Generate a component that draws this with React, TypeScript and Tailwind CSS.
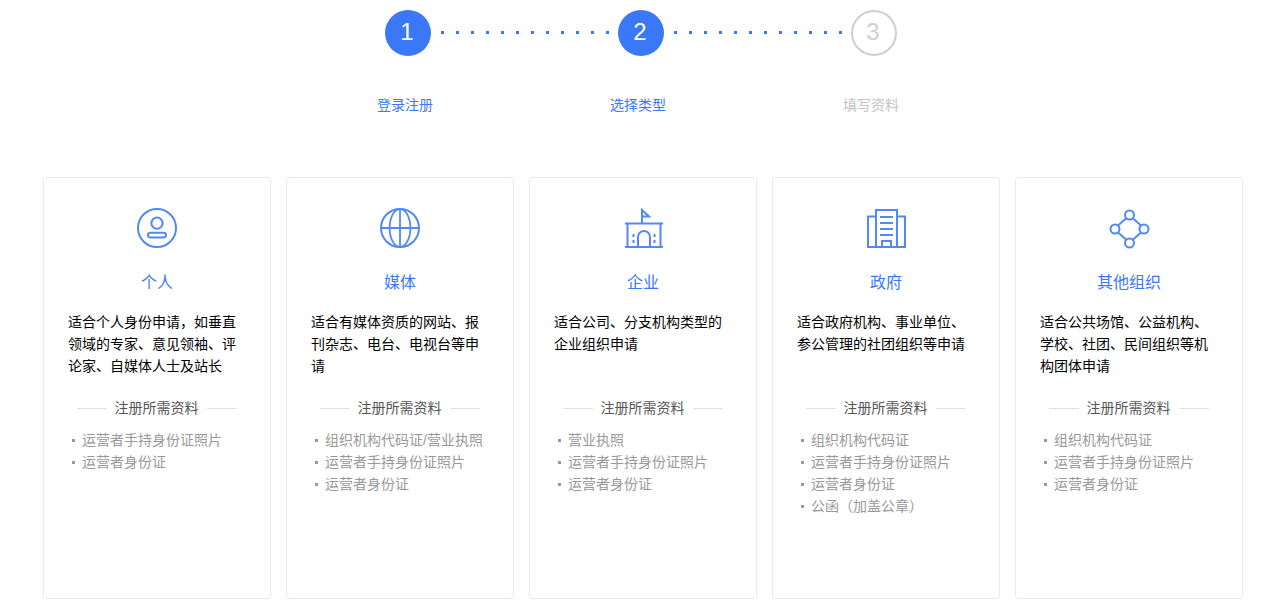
import React from "react";

/* ------------------------------ Icons ------------------------------ */

function PersonIcon() {
  return (
    <svg width="40" height="40" viewBox="0 0 40 40" fill="none" stroke="#5288f8" strokeWidth="2">
      <circle cx="20" cy="20" r="19" />
      <circle cx="20" cy="15.2" r="5.6" />
      <rect x="11" y="24.8" width="18" height="4.6" rx="2.3" />
    </svg>
  );
}

function GlobeIcon() {
  return (
    <svg width="40" height="40" viewBox="0 0 40 40" fill="none" stroke="#5288f8" strokeWidth="1.8">
      <circle cx="20" cy="20" r="19" strokeWidth="2" />
      <ellipse cx="20" cy="20" rx="10.400" ry="19" />
      <path d="M20 1v38M1 20h38" />
    </svg>
  );
}

function SchoolIcon() {
  return (
    <svg width="40" height="40" viewBox="0 -1 40 40" fill="none" stroke="#5288f8" strokeWidth="2">
      <path d="M19 14V1l7 6.400h-7" />
      <path d="M2 14.400h38M2 38h38M4.500 14.400V38M37.500 14.400V38" />
      <path d="M15 38V28a6 6 0 0 1 12 0v10" />
      <path d="M10.500 25v3M10.500 31v3M31.500 25v3M31.500 31v3" />
    </svg>
  );
}

function BuildingIcon() {
  return (
    <svg width="40" height="40" viewBox="0 -1 40 40" fill="none" stroke="#5288f8" strokeWidth="2">
      <path d="M10 7.500H2V38H39V7.500H31" />
      <path d="M10 38V1H31V38" />
      <path d="M14 8h13M14 14h13M14 20h13M14 26h13" />
      <path d="M16 38V32H25V38" />
    </svg>
  );
}

function NodesIcon() {
  return (
    <svg width="40" height="40" viewBox="-1 -2 40 40" fill="none" stroke="#5288f8" strokeWidth="2" className="overflow-visible">
      <circle cx="19.500" cy="5" r="4.500" />
      <circle cx="19.500" cy="33" r="4.500" />
      <circle cx="5" cy="19" r="4.500" />
      <circle cx="34" cy="19" r="4.500" />
      <path d="M16.500 8 8 15.500M22.500 8 31 15.500M8 22.500 16.500 30M31 22.500 22.500 30" />
    </svg>
  );
}

/* ------------------------------ Data ------------------------------ */

const cards = [
  {
    title: "个人",
    icon: <PersonIcon />,
    desc: "适合个人身份申请，如垂直领域的专家、意见领袖、评论家、自媒体人士及站长",
    docs: ["运营者手持身份证照片", "运营者身份证"],
  },
  {
    title: "媒体",
    icon: <GlobeIcon />,
    desc: "适合有媒体资质的网站、报刊杂志、电台、电视台等申请",
    docs: ["组织机构代码证/营业执照", "运营者手持身份证照片", "运营者身份证"],
  },
  {
    title: "企业",
    icon: <SchoolIcon />,
    desc: "适合公司、分支机构类型的企业组织申请",
    docs: ["营业执照", "运营者手持身份证照片", "运营者身份证"],
  },
  {
    title: "政府",
    icon: <BuildingIcon />,
    desc: "适合政府机构、事业单位、参公管理的社团组织等申请",
    docs: ["组织机构代码证", "运营者手持身份证照片", "运营者身份证", "公函（加盖公章）"],
  },
  {
    title: "其他组织",
    icon: <NodesIcon />,
    desc: "适合公共场馆、公益机构、学校、社团、民间组织等机构团体申请",
    docs: ["组织机构代码证", "运营者手持身份证照片", "运营者身份证"],
  },
];

/* ------------------------------ Steps ------------------------------ */

function Dots() {
  return (
    <div className="w-[187px] flex pl-[10px] gap-[12px]">
      {Array.from({ length: 12 }).map((_, i) => (
        <span key={i} className="w-[3px] h-[3px] bg-[#3b78f7] -mt-px" />
      ))}
    </div>
  );
}

function Circle({ n, active }: { n: number; active?: boolean }) {
  return (
    <div
      className={
        active
          ? "w-[46px] h-[46px] rounded-full bg-[#3b78f7] text-white flex items-center justify-center text-[24px] shrink-0"
          : "w-[46px] h-[46px] rounded-full border-2 border-[#cfcfcf] text-[#cfcfcf] flex items-center justify-center text-[24px] shrink-0"
      }
    >
      <span className="-mt-[2px] -ml-[2px]">{n}</span>
    </div>
  );
}

function Steps() {
  return (
    <div className="pt-[10px]">
      <div className="flex items-center pl-[385px] font-['Liberation_Sans',sans-serif]">
        <Circle n={1} active />
        <Dots />
        <Circle n={2} active />
        <Dots />
        <Circle n={3} />
      </div>
      <div className="flex pl-[377px] mt-[39px] text-[14px] leading-[20px]">
        <div className="w-[233px] text-[#3b78f7]">登录注册</div>
        <div className="w-[233px] text-[#3b78f7]">选择类型</div>
        <div className="w-[233px] text-[#c4c4c4]">填写资料</div>
      </div>
    </div>
  );
}

/* ------------------------------ Card ------------------------------ */

function Card({ card }: { card: (typeof cards)[number] }) {
  return (
    <div className="w-[228px] h-[422px] shrink-0 bg-white border border-[#ebebeb] rounded-[3px] pt-[30px]">
      <div className="flex justify-center">{card.icon}</div>
      <div className="mt-[23px] text-center text-[16px] leading-[24px] text-[#3b78f7]">{card.title}</div>
      <p className="mt-[16px] ml-[24px] w-[172px] h-[66px] text-[14px] leading-[22px] text-black">{card.desc}</p>
      <div className="mt-[20px] flex items-center justify-center gap-[8px] -ml-px">
        <span className="w-[30px] h-px bg-[#e0e0e0]" />
        <span className="text-[14px] leading-[22px] text-[#555555]">注册所需资料</span>
        <span className="w-[30px] h-px bg-[#e0e0e0]" />
      </div>
      <ul className="mt-[10px] ml-[28px] text-[14px] leading-[22px] text-[#999999]">
        {card.docs.map(doc => (
          <li key={doc} className="flex items-center whitespace-nowrap">
            <span className="w-[3px] h-[3px] bg-[#999999] mr-[7px] shrink-0" />
            {doc}
          </li>
        ))}
      </ul>
    </div>
  );
}

export default function App() {
  return (
    <div className="w-[1280px] h-[614px] overflow-hidden bg-white font-['Liberation_Sans','Noto_Sans_CJK_SC',sans-serif]">
      <Steps />
      <div className="flex gap-[15px] pl-[43px] mt-[62px]">
        {cards.map(c => (
          <Card key={c.title} card={c} />
        ))}
      </div>
    </div>
  );
}
